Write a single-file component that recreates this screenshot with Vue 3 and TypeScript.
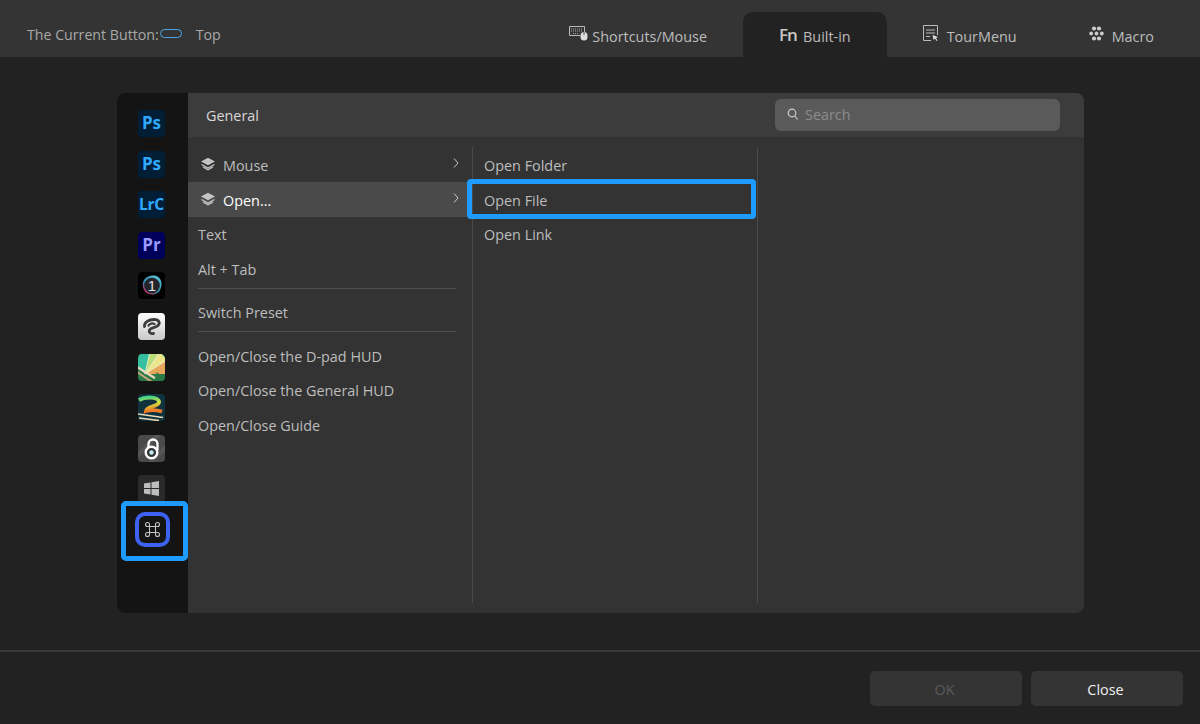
<template>
  <div class="page">
    <header class="topbar">
      <div class="current">
        <span>The Current Button:</span>
        <span class="pill"></span>
        <span class="pos">Top</span>
      </div>
      <nav class="tabs">
        <div v-for="t in tabs" :key="t.name" class="tab" :class="[t.cls, { active: t.name === 'Built-in' }]">
          <svg v-if="t.name === 'Shortcuts/Mouse'" class="tab-icon" width="19" height="15" viewBox="0 0 19 15">
            <path d="M11 9.500H.5v-9h15V6" fill="none" stroke="#bbb" />
            <path d="M2 3h12M2 5h11M4 7.500h6" stroke="#aaa" stroke-dasharray="1 1" fill="none" />
            <rect x="11.500" y="6" width="7" height="8.500" rx="3.500" fill="#ddd" />
            <path d="M15 6v3" stroke="#333" stroke-width="0.800" />
          </svg>
          <span v-else-if="t.name === 'Built-in'" class="fn">Fn</span>
          <svg v-else-if="t.name === 'TourMenu'" class="tab-icon" width="16" height="17" viewBox="0 0 16 17">
            <path d="M8 15.500H.5V.5h14V10" fill="none" stroke="#bbb" />
            <path d="M3 5h9M3 8h9M3 11.500h4" stroke="#bbb" fill="none" />
            <path d="M9.500 10l5.500 2-2 1 1.500 2.500-1 .5-1.500-2.500-1.500 1.500z" fill="#ddd" />
          </svg>
          <svg v-else class="tab-icon" width="15" height="15" viewBox="0 0 15 15" fill="#ccc">
            <circle cx="5" cy="2.500" r="2.100" /><circle cx="10" cy="2.500" r="2.100" />
            <circle cx="2.200" cy="7.500" r="1.900" /><circle cx="7.500" cy="7.500" r="1.900" /><circle cx="12.800" cy="7.500" r="1.900" />
            <circle cx="5" cy="12.500" r="2.100" /><circle cx="10" cy="12.500" r="2.100" />
          </svg>
          <span>{{ t.name }}</span>
        </div>
      </nav>
    </header>

    <main class="content">
      <section class="panel">
        <aside class="apps">
          <div v-for="a in adobe" :key="a.id" class="app" :class="a.cls">{{ a.label }}</div>

          <!-- capture one -->
          <div class="app">
            <svg width="27" height="27" viewBox="0 0 27 27">
              <defs>
                <linearGradient id="ring" x1="0.8" y1="0" x2="0.1" y2="0.9">
                  <stop offset="0" stop-color="#5cc4d8" />
                  <stop offset="0.6" stop-color="#2f8fb0" />
                  <stop offset="1" stop-color="#d81f5c" />
                </linearGradient>
              </defs>
              <rect width="27" height="27" rx="4" fill="#000" />
              <path d="M15 3.500c4 0 7 2 8 5.500 1 3 .5 7-1.500 10-2 2.500-5 4-8 3.500-3-.5-6-1.500-7.500-4.500C4.500 15 4 11 6 8c2-3 5.500-4.500 9-4.500z" fill="url(#ring)" />
              <circle cx="14" cy="13.500" r="7.800" fill="#23232a" />
              <text x="14" y="18.800" text-anchor="middle" class="one">1</text>
            </svg>
          </div>
          <!-- clip studio -->
          <div class="app">
            <svg width="27" height="27" viewBox="0 0 27 27">
              <defs>
                <linearGradient id="paper" x1="0" y1="0" x2="0" y2="1">
                  <stop offset="0" stop-color="#fff" />
                  <stop offset="1" stop-color="#c9c9c9" />
                </linearGradient>
              </defs>
              <rect width="27" height="27" rx="4" fill="url(#paper)" />
              <path d="M6.500 13.500C6 9 11 6.500 16 6.500c5 0 6.500 3.500 4 6-2.500 2.500-7 2-8.500 4.500-1 2 1 4 4 3.500" fill="none" stroke="#3d3d3d" stroke-width="2.800" stroke-linecap="round" />
              <path d="M10.500 12.500c1.500-2 4-2.500 6-1.500" fill="none" stroke="#3d3d3d" stroke-width="2.200" stroke-linecap="round" />
            </svg>
          </div>
          <!-- lime slice -->
          <div class="app">
            <svg width="27" height="27" viewBox="0 0 27 27">
              <defs>
                <clipPath id="round1"><rect width="27" height="27" rx="4" /></clipPath>
              </defs>
              <g clip-path="url(#round1)">
                <rect width="27" height="27" fill="#2d7a49" />
                <path d="M7 20L-2 12 2 -2 12 -2z" fill="#35bfa0" />
                <path d="M7 20L12 -2 22 -2z" fill="#b8dd78" />
                <path d="M7 20L22 -2 29 6z" fill="#ece58a" />
                <path d="M7 20L29 6 29 20z" fill="#e6a75a" />
                <path d="M7 20L12 -2M7 20L22 -2M7 20L29 6" stroke="#f6f6d8" stroke-width="0.900" />
                <path d="M-1 13L20 26" stroke="#e9d9b8" stroke-width="2.200" />
                <path d="M-1 18L14 28" stroke="#c9a77c" stroke-width="2" />
                <path d="M19 18L27 27H16z" fill="#2d7a49" />
              </g>
            </svg>
          </div>
          <!-- number 2 -->
          <div class="app">
            <svg width="27" height="27" viewBox="0 0 27 27">
              <defs>
                <linearGradient id="two" x1="0" y1="0" x2="0.2" y2="1">
                  <stop offset="0" stop-color="#3fd38a" />
                  <stop offset="0.5" stop-color="#d6df3f" />
                  <stop offset="1" stop-color="#ef7a28" />
                </linearGradient>
              </defs>
              <rect width="27" height="27" rx="4" fill="#10323f" />
              <path d="M1 6c7-4 19-3 20 1.500 1 5-12 4.500-13 9.500 5-1.500 11-1 16 .5" fill="none" stroke="url(#two)" stroke-width="3.800" />
              <path d="M0 20l25 3.500M1 24l20 2.500" stroke="#e9d9b8" stroke-width="1.600" />
            </svg>
          </div>
          <!-- lock -->
          <div class="app">
            <svg width="27" height="27" viewBox="0 0 27 27">
              <rect width="27" height="27" rx="4" fill="#4a4a4a" />
              <path d="M0 17L17 0h6L0 23zM10 27L27 10v6L16 27z" fill="#565656" />
              <path d="M10.500 13V9a4.500 4.500 0 0 1 9 0v6" fill="none" stroke="#fff" stroke-width="2.300" />
              <circle cx="13.500" cy="17.500" r="5.800" fill="#333" stroke="#fff" stroke-width="2.400" />
              <circle cx="13.500" cy="17.500" r="2.200" fill="#bfe9f2" />
            </svg>
          </div>
          <!-- windows -->
          <div class="app">
            <svg width="27" height="27" viewBox="0 0 27 27">
              <rect width="27" height="27" rx="4" fill="#2a2a2a" />
              <path d="M6 8.500l6.500-1V13H6zM13.500 7.300L21 6v7h-7.500zM6 14h6.500v5.500L6 18.500zM13.500 14H21v7l-7.500-1.200z" fill="#bdbdbd" />
            </svg>
          </div>
          <div class="app app-selected">
            <svg width="17" height="17" viewBox="0 0 17 17" fill="none" stroke="#c4c4c4" stroke-width="1.100">
              <path d="M5.500 5.500h6v6h-6zM5.500 5.500H3.500a2 2 0 1 1 2-2zM11.500 5.500V3.500a2 2 0 1 1 2 2zM11.500 11.500h2a2 2 0 1 1-2 2zM5.500 11.500v2a2 2 0 1 1-2-2z" />
            </svg>
          </div>
        </aside>

        <div class="right">
          <div class="panel-head">
            <span>General</span>
            <div class="search">
              <svg width="12" height="13" viewBox="0 0 12 13">
                <circle cx="5" cy="5" r="3.800" fill="none" stroke="#ccc" stroke-width="1.200" />
                <path d="M7.800 8l2.700 3.500" stroke="#ccc" stroke-width="1.200" />
              </svg>
              <span>Search</span>
            </div>
          </div>

          <div class="columns">
            <div class="col first">
              <template v-for="m in menu" :key="m.label">
                <div v-if="m.divider" class="sep"></div>
                <div class="row" :class="{ hover: m.active, sub: m.sub }">
                  <svg v-if="m.sub" class="layers" width="16" height="14" viewBox="0 0 16 14">
                    <path d="M8 .8l7 3.700-7 3.700-7-3.700z" fill="#c4c4c4" />
                    <path d="M1.500 7.500L8 11l6.500-3.500M3 10l5 2.800 5-2.800" fill="none" stroke="#c4c4c4" stroke-width="1.300" />
                  </svg>
                  <span>{{ m.label }}</span>
                  <svg v-if="m.sub" class="arrow" width="6" height="10" viewBox="0 0 6 10">
                    <path d="M1 .5L5 5 1 9.500" fill="none" stroke="#c8c8c8" />
                  </svg>
                </div>
              </template>
            </div>
            <div class="col second">
              <div v-for="s in sub" :key="s" class="row" :class="{ selected: s === 'Open File' }">
                <span>{{ s }}</span>
              </div>
            </div>
            <div class="col third"></div>
          </div>
        </div>
      </section>
    </main>

    <footer class="bottom">
      <button class="btn off">OK</button>
      <button class="btn">Close</button>
    </footer>
  </div>
</template>

<script setup lang="ts">
const tabs = [
  { name: "Shortcuts/Mouse", cls: "tight" },
  { name: "Built-in", cls: "" },
  { name: "TourMenu", cls: "" },
  { name: "Macro", cls: "" },
];

const adobe = [
  { id: 1, label: "Ps", cls: "ps" },
  { id: 2, label: "Ps", cls: "ps" },
  { id: 3, label: "LrC", cls: "ps lrc" },
  { id: 4, label: "Pr", cls: "pr" },
];

const menu = [
  { label: "Mouse", sub: true },
  { label: "Open...", sub: true, active: true },
  { label: "Text" },
  { label: "Alt + Tab" },
  { label: "Switch Preset", divider: true },
  { label: "Open/Close the D-pad HUD", divider: true },
  { label: "Open/Close the General HUD" },
  { label: "Open/Close Guide" },
];

const sub = ["Open Folder", "Open File", "Open Link"];
</script>

<style scoped>
.page {
  width: 1200px;
  height: 724px;
  background: #222;
  color: #bdbdbd;
  font-family: "Open Sans", "Noto Sans", sans-serif;
  font-size: 14.4px;
  display: flex;
  flex-direction: column;
  overflow: hidden;
}
.topbar {
  height: 57px;
  flex: none;
  background: #343434;
  display: flex;
  justify-content: space-between;
  align-items: flex-end;
  padding: 0 10px 0 27px;
}
.current {
  display: flex;
  align-items: center;
  height: 45px;
  padding-top: 2px;
  color: #a8a8a8;
  font-size: 14.2px;
}
.pill {
  width: 22px;
  height: 9px;
  box-sizing: border-box;
  border: 1px solid #4ea6e6;
  border-radius: 5px;
  margin: 0 14px 3px 1px;
}
.tabs {
  display: flex;
  height: 45px;
}
.tab {
  display: flex;
  align-items: center;
  gap: 8px;
  padding: 4px 36px 0;
}
.tab.tight {
  gap: 4px;
}
.tab.active {
  background: #222;
  border-radius: 10px 10px 0 0;
}
.tab-icon {
  margin-top: -6px;
}
.fn {
  width: 16px;
  font-weight: 600;
  font-size: 17px;
  letter-spacing: -1.2px;
  color: #c8c8c8;
  margin-top: -4px;
}
.content {
  flex: 1;
  padding: 36px 116px 0 117px;
  border-bottom: 2px solid #3a3a3a;
}
.panel {
  height: 520px;
  display: flex;
  border-radius: 8px;
  overflow: hidden;
  background: #333;
}
.apps {
  width: 71px;
  box-sizing: border-box;
  flex: none;
  background: #141414;
  display: flex;
  flex-direction: column;
  align-items: center;
  padding: 17px 2px 0 0;
  gap: 13.6px;
}
.app {
  width: 27px;
  height: 27px;
  box-sizing: border-box;
  flex: none;
  border-radius: 4px;
  display: flex;
  align-items: center;
  justify-content: center;
  font-weight: 700;
  font-size: 17px;
  position: relative;
}
.ps {
  background: #001e36;
  color: #31a8ff;
  padding-bottom: 2px;
}
.lrc {
  font-size: 15.5px;
  letter-spacing: -0.3px;
}
.pr {
  background: #00005b;
  color: #9999ff;
  padding-bottom: 2px;
}
.one {
  fill: #e0e0e0;
  font-family: "Liberation Sans", sans-serif;
  font-size: 15px;
  font-weight: 400;
}
.app-selected {
  left: 1px;
  background: #141414;
  box-shadow: 0 0 0 4px #3d62f2;
  border-radius: 6px;
}
.app-selected::after {
  content: "";
  position: absolute;
  left: -18px;
  right: -22px;
  top: -15px;
  bottom: -18px;
  border: 5px solid #1e9bff;
  border-radius: 5px;
}
.right {
  flex: 1;
  display: flex;
  flex-direction: column;
}
.panel-head {
  height: 44px;
  flex: none;
  background: #3c3c3c;
  display: flex;
  align-items: center;
  justify-content: space-between;
  padding: 0 24px 0 18px;
  color: #d8d8d8;
}
.search {
  width: 285px;
  height: 32px;
  box-sizing: border-box;
  background: #5a5a5a;
  border-radius: 6px;
  display: flex;
  align-items: center;
  gap: 6px;
  padding: 0 0 1px 12px;
  color: #8c8c8c;
}
.columns {
  flex: 1;
  display: flex;
  padding: 10px 0;
}
.col {
  padding-top: 0.5px;
}
.first {
  width: 284px;
  border-right: 1px solid #4a4a4a;
}
.second {
  width: 284px;
  border-right: 1px solid #4a4a4a;
}
.third {
  flex: 1;
}
.row {
  height: 34.5px;
  box-sizing: border-box;
  padding-top: 1.5px;
  display: flex;
  align-items: center;
  padding-left: 10px;
  position: relative;
}
.row.sub {
  padding-left: 12px;
}
.layers {
  margin: -3px 7px 0 0;
}
.arrow {
  position: absolute;
  right: 13px;
  top: 10.5px;
}
.hover {
  background: #4a4a4a;
  color: #fff;
}
.second .row {
  padding-left: 11px;
}
.selected::after {
  content: "";
  position: absolute;
  left: -6px;
  right: 1px;
  top: -3px;
  bottom: -2.5px;
  border: 5px solid #1e9bff;
  border-radius: 4px;
}
.sep {
  height: 1px;
  background: #4f4f4f;
  margin: 2px 16px 6px 10px;
}
.bottom {
  height: 72px;
  flex: none;
  display: flex;
  justify-content: flex-end;
  gap: 9px;
  padding: 19px 17px 0 0;
  box-sizing: border-box;
}
.btn {
  width: 152px;
  height: 35px;
  border: none;
  border-radius: 5px;
  background: #343434;
  color: #f0f0f0;
  font-family: inherit;
  font-size: 14.4px;
  padding: 1px 3px 0 0;
}
.btn.off {
  color: #5a5a5a;
}
</style>
